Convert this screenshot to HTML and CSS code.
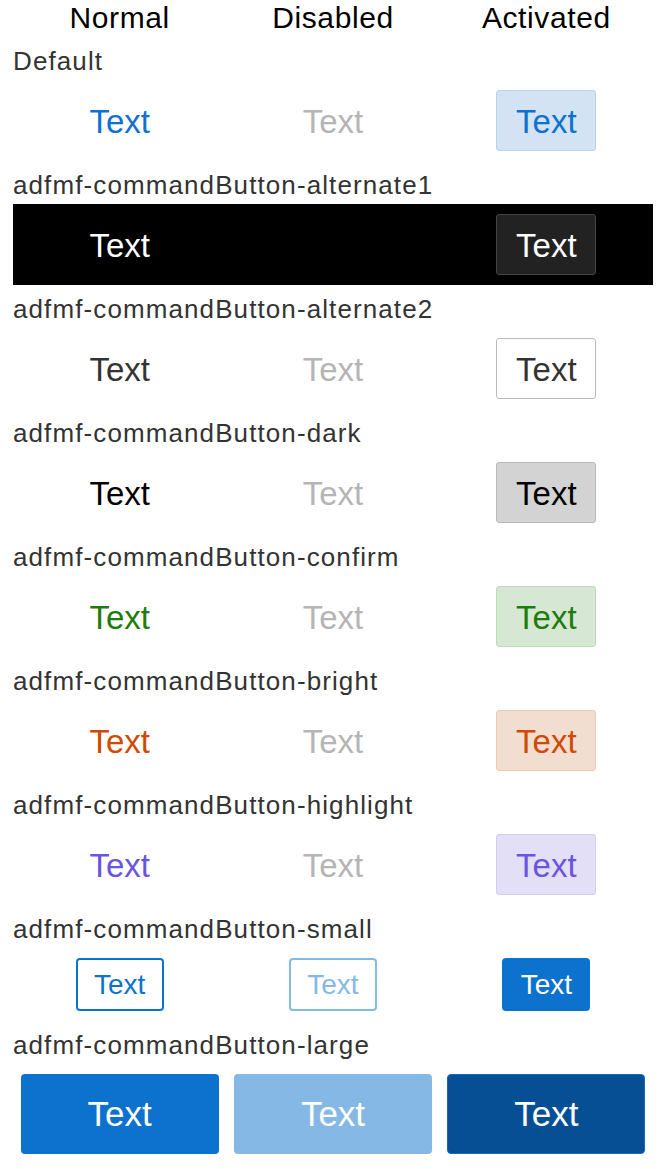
FILE: index.html
```html
<!DOCTYPE html>
<html lang="en">
<head>
  <meta charset="UTF-8" />
  <meta name="viewport" content="width=device-width, initial-scale=1.0" />
  <title>Command Button Styles</title>
  <link rel="stylesheet" href="styles.css">
</head>
<body>
  <div class="header">
    <div>Normal</div>
    <div>Disabled</div>
    <div>Activated</div>
  </div>

  <div class="label">Default</div>
  <div class="row">
    <div class="btn default">Text</div>
    <div class="btn disabled">Text</div>
    <div class="btn default active">Text</div>
  </div>

  <div class="label">adfmf-commandButton-alternate1</div>
  <div class="row row-black">
    <div class="btn alt1">Text</div>
    <div class="btn alt1 disabled-black">Text</div>
    <div class="btn alt1 active">Text</div>
  </div>

  <div class="label">adfmf-commandButton-alternate2</div>
  <div class="row">
    <div class="btn alt2">Text</div>
    <div class="btn disabled">Text</div>
    <div class="btn alt2 active">Text</div>
  </div>

  <div class="label">adfmf-commandButton-dark</div>
  <div class="row">
    <div class="btn dark">Text</div>
    <div class="btn disabled">Text</div>
    <div class="btn dark active">Text</div>
  </div>

  <div class="label">adfmf-commandButton-confirm</div>
  <div class="row">
    <div class="btn confirm">Text</div>
    <div class="btn disabled">Text</div>
    <div class="btn confirm active">Text</div>
  </div>

  <div class="label">adfmf-commandButton-bright</div>
  <div class="row">
    <div class="btn bright">Text</div>
    <div class="btn disabled">Text</div>
    <div class="btn bright active">Text</div>
  </div>

  <div class="label">adfmf-commandButton-highlight</div>
  <div class="row">
    <div class="btn highlight">Text</div>
    <div class="btn disabled">Text</div>
    <div class="btn highlight active">Text</div>
  </div>

  <div class="label">adfmf-commandButton-small</div>
  <div class="row">
    <div class="small">Text</div>
    <div class="small small-disabled">Text</div>
    <div class="small small-active">Text</div>
  </div>

  <div class="label">adfmf-commandButton-large</div>
  <div class="row">
    <div class="large">Text</div>
    <div class="large large-disabled">Text</div>
    <div class="large large-active">Text</div>
  </div>
</body>
</html>
```

FILE: styles.css
```css
body {
  margin: 0;
  padding: 0 5px 0 13px;
  font-family: 'Liberation Sans', Arial, sans-serif;
  background-color: #ffffff;
  color: #333333;
}

.header {
  display: grid;
  grid-template-columns: 1fr 1fr 1fr;
  text-align: center;
  font-size: 30px;
  line-height: 36px;
  letter-spacing: 0.6px;
  color: #000000;
}

.label {
  margin-top: 10px;
  font-size: 26px;
  line-height: 30px;
  letter-spacing: 1.1px;
  color: #333333;
  white-space: nowrap;
}

.row + .label {
  margin-top: 0;
}

.row {
  display: grid;
  grid-template-columns: 1fr 1fr 1fr;
  justify-items: center;
  align-items: center;
  margin: 14px 0 19px;
}

.row-black {
  background-color: #000000;
  margin: 4px 0 9px;
  padding: 10px 0;
}

/* regular buttons */
.btn {
  box-sizing: border-box;
  width: 100px;
  height: 61px;
  border: 1px solid transparent;
  border-radius: 3px;
  font-size: 33px;
  line-height: 62px;
  text-align: center;
}

.default { color: #0c72ce; }
.disabled { color: #b5b5b5; }
.default.active { background-color: #d3e3f3; border-color: #b7d3ee; }

.alt1 { color: #ffffff; }
.disabled-black { color: #000000; }
.alt1.active { background-color: #222222; border-color: #444444; }

.alt2 { color: #333333; }
.alt2.active { background-color: #ffffff; border-color: #bbbbbb; }

.dark { color: #000000; }
.dark.active { background-color: #d3d3d3; border-color: #b9b9b9; }

.confirm { color: #1c7d0c; }
.confirm.active { background-color: #d6e7d3; border-color: #bfdcb9; }

.bright { color: #cf4a05; }
.bright.active { background-color: #f2ddd1; border-color: #eecab5; }

.highlight { color: #6b55e0; }
.highlight.active { background-color: #e2dff7; border-color: #d2cbf3; }

/* small buttons */
.small {
  box-sizing: border-box;
  width: 88px;
  height: 53px;
  border: 2px solid #0c72ce;
  border-radius: 4px;
  color: #0c72ce;
  font-size: 28px;
  line-height: 50px;
  text-align: center;
}

.small-disabled {
  border-color: #85b9e6;
  color: #85b9e6;
}

.small-active {
  background-color: #0c72ce;
  color: #ffffff;
}

/* large buttons */
.large {
  box-sizing: border-box;
  width: 198px;
  height: 80px;
  border-radius: 4px;
  background-color: #0c72ce;
  color: #ffffff;
  font-size: 35px;
  line-height: 80px;
  text-align: center;
}

.large-disabled {
  background-color: #85b8e5;
}

.large-active {
  background-color: #074f94;
  border: 1px solid #1168c6;
  line-height: 78px;
}
```
